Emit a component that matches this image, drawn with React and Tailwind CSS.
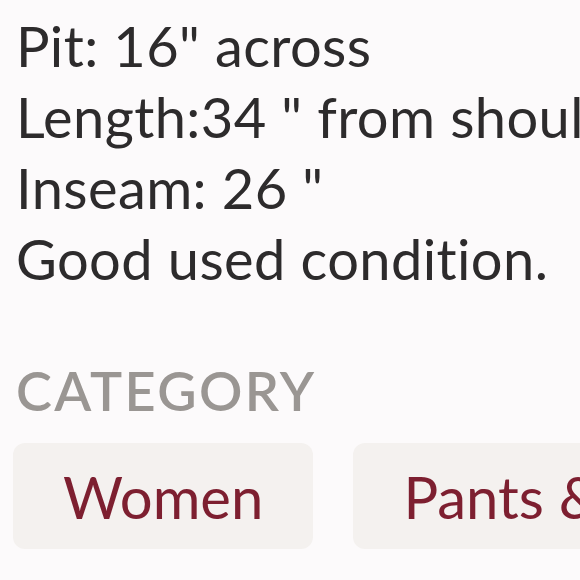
export default function App() {
  const lines = [
    'Pit: 16" across',
    'Length:34 " from shoulder',
    'Inseam: 26 "',
    "Good used condition.",
  ]

  return (
    <div
      className="w-[580px] h-[580px] overflow-hidden bg-[#fcfafb] px-4 pt-[10px] [font-variant-ligatures:none]"
      style={{ fontFamily: "Lato, 'Noto Sans', sans-serif" }}
    >
      <div className="text-[56px] leading-[71px] tracking-[0.4px] text-[#2d2b2c] whitespace-nowrap">
        {lines.map((l) => (
          <div key={l}>{l}</div>
        ))}
      </div>

      <h3 className="mt-[65px] text-[54px] leading-[64px] tracking-[2.4px] font-semibold text-[#9a9693] uppercase">
        Category
      </h3>

      <div className="mt-[20px] -ml-[3px] flex gap-10 whitespace-nowrap">
        <span className="shrink-0 h-[106px] flex items-center px-[50px] rounded-xl bg-[#f4f1ef] text-[58px] text-[#7d1f30]">
          Women
        </span>
        <span className="shrink-0 h-[106px] flex items-center px-[50px] rounded-xl bg-[#f4f1ef] text-[58px] text-[#7d1f30]">
          Pants &amp; Jumpsuits
        </span>
      </div>
    </div>
  )
}
